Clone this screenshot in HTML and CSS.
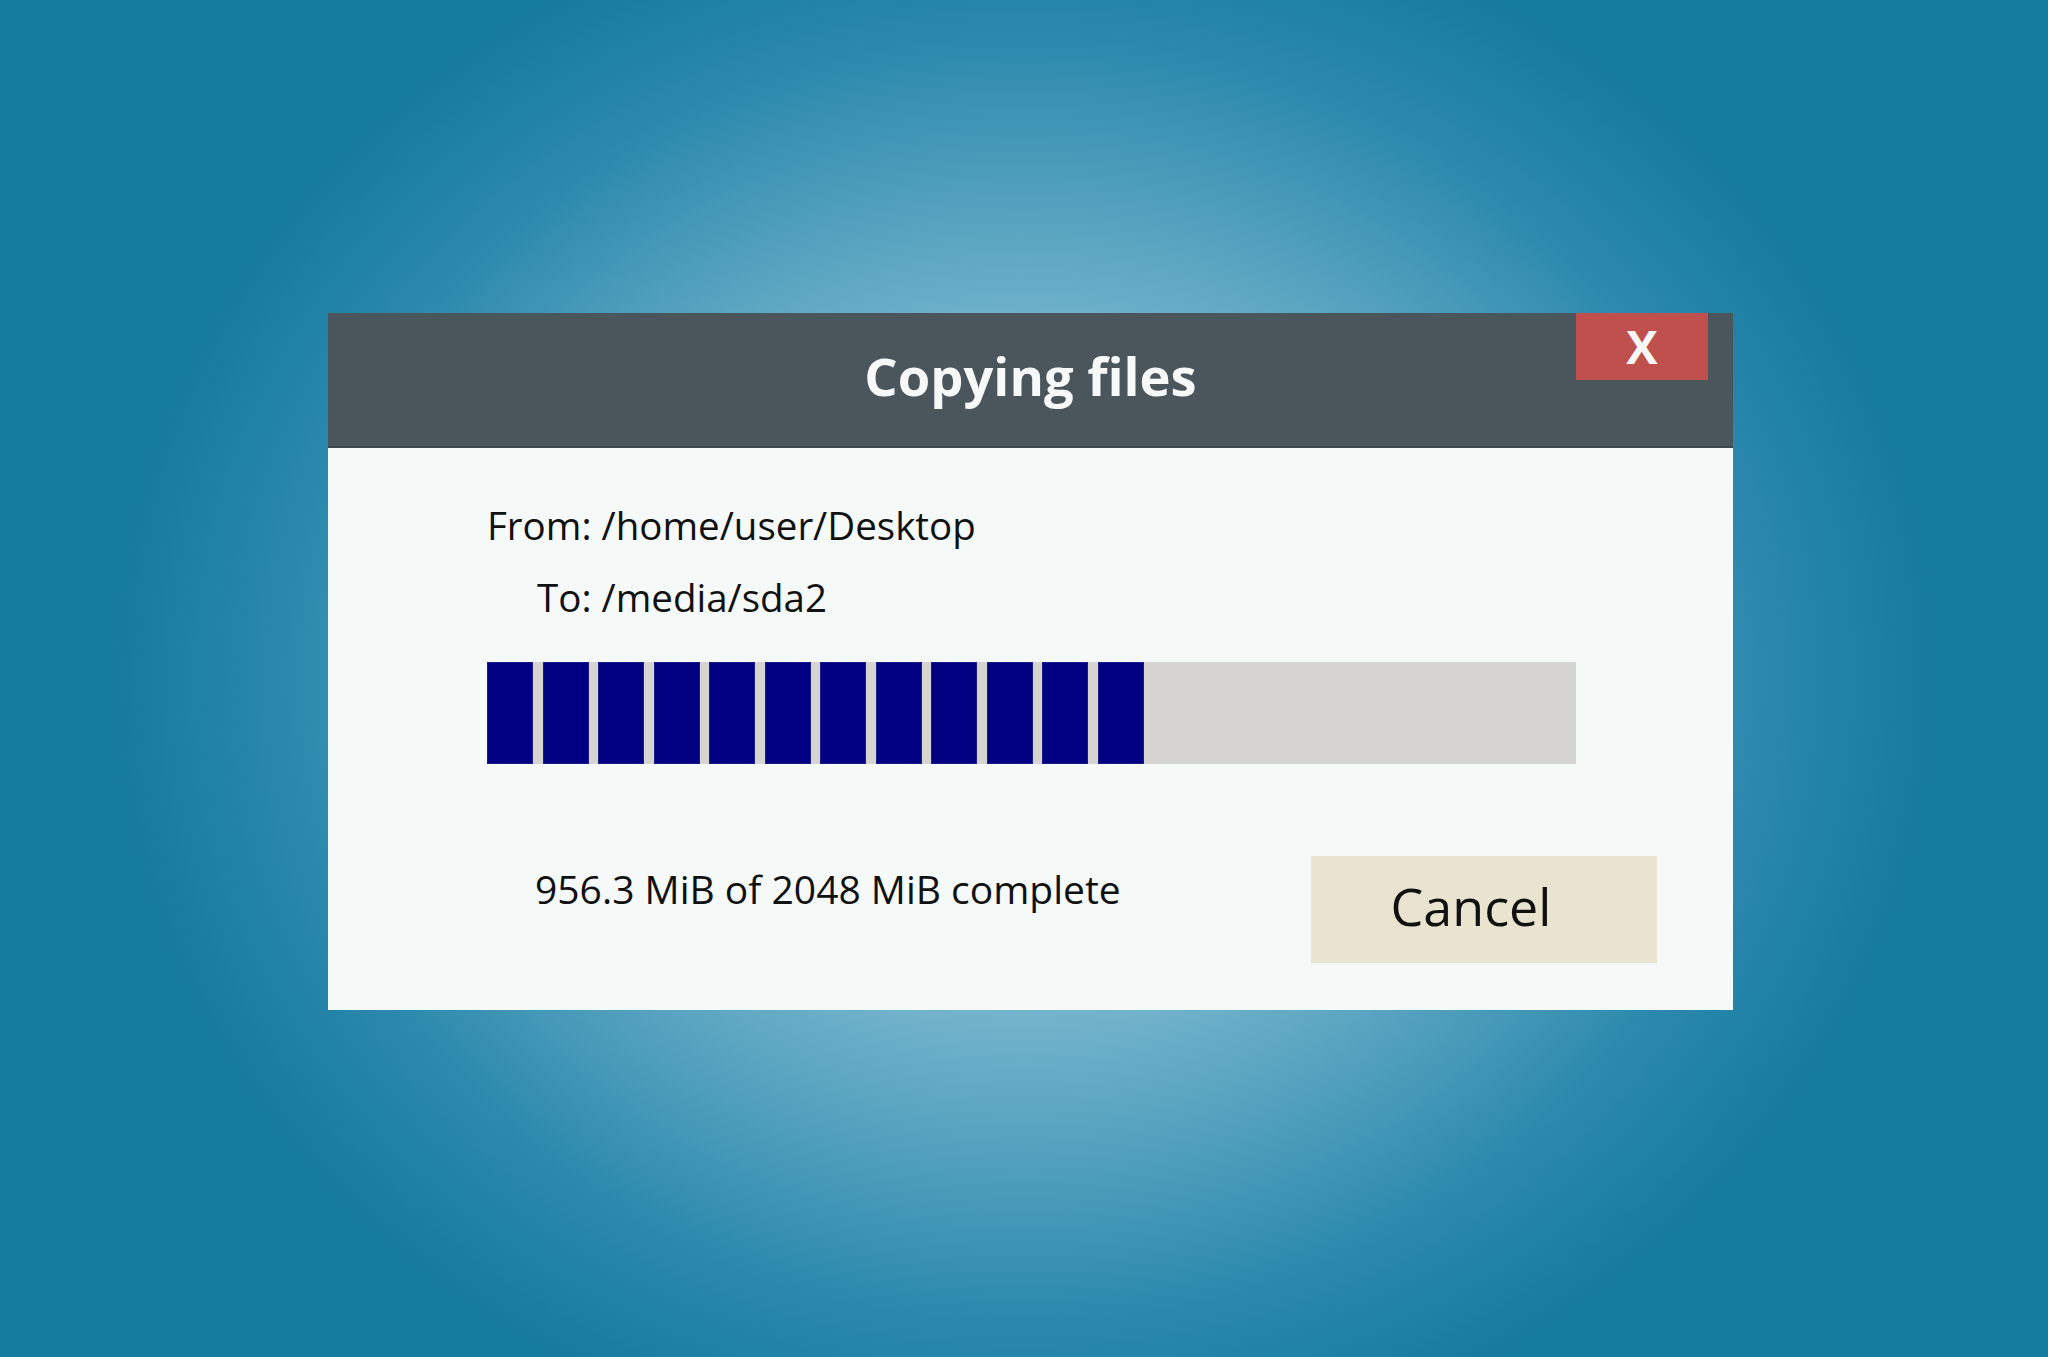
FILE: index.html
```html
<!DOCTYPE html>
<html lang="en">
<head>
  <meta charset="UTF-8" />
  <meta name="viewport" content="width=device-width, initial-scale=1.0" />
  <title>Copying files</title>
  <link rel="stylesheet" href="styles.css">
</head>
<body>

  <div class="desktop">
    <div class="dialog">

      <div class="titlebar">
        <h1>Copying files</h1>
        <button class="close">X</button>
      </div>

      <div class="dialog-body">
        <div class="paths">
          <span class="label">From:</span>
          <span class="path">/home/user/Desktop</span>
          <span class="label">To:</span>
          <span class="path">/media/sda2</span>
        </div>

        <div class="progress">
          <div class="chunk"></div>
          <div class="chunk"></div>
          <div class="chunk"></div>
          <div class="chunk"></div>
          <div class="chunk"></div>
          <div class="chunk"></div>
          <div class="chunk"></div>
          <div class="chunk"></div>
          <div class="chunk"></div>
          <div class="chunk"></div>
          <div class="chunk"></div>
          <div class="chunk"></div>
        </div>

        <div class="footer">
          <div class="status">956.3 MiB of 2048 MiB complete</div>
          <button class="cancel">Cancel</button>
        </div>
      </div>

    </div>
  </div>

</body>
</html>
```

FILE: styles.css
```css
:root {
  --fundo-borda: #147a9e;
  --titulo: #4a555c;
  --fechar: #c0504d;
  --janela: #f5faf8;
  --botao: #e8e4cf;
  --bloco: #000080;
  --trilha: #d5d4d1;
}

* {
  box-sizing: border-box;
}

body {
  margin: 0;
  padding: 0;
  font-family: 'Open Sans', 'Noto Sans', sans-serif;
  color: #111;
  background-color: var(--fundo-borda);
  background-image: radial-gradient(ellipse 920px 800px at 1024px 678px,
    #c4e1eb 0%, #8dc3d6 28%, #5ca6c2 55%, #2b89ad 80%, var(--fundo-borda) 100%);
  min-height: 100vh;
}

.desktop {
  padding: 313px 0 0 328px;
}

.dialog {
  width: 1405px;
  background-color: var(--janela);
}

.titlebar {
  position: relative;
  height: 135px;
  padding-top: 27px;
  background-color: var(--titulo);
  border-bottom: 2px solid #3f484e;
  text-align: center;
}

.titlebar h1 {
  margin: 0;
  font-size: 52.5px;
  font-weight: 700;
  color: #f7f8f8;
  line-height: normal;
}

.close {
  position: absolute;
  top: 0;
  right: 25px;
  width: 132px;
  height: 67px;
  padding: 0;
  border: none;
  background-color: var(--fechar);
  color: #f7f7f7;
  font-family: 'Open Sans', sans-serif;
  font-size: 47px;
  font-weight: 700;
  line-height: 67px;
}

.dialog-body {
  padding: 41px 76px 47px 159px;
}

.paths {
  display: grid;
  grid-template-columns: auto 1fr;
  column-gap: 10px;
  font-size: 38.5px;
  line-height: 72px;
}

.label {
  text-align: right;
}

.progress {
  display: flex;
  gap: 9.5px;
  height: 102px;
  margin: 29px 81px 0 0;
  background-color: var(--trilha);
}

.chunk {
  width: 46px;
  background-color: var(--bloco);
  box-shadow: inset 0 0 0 1px #1a1a8a;
}

.footer {
  display: flex;
  align-items: flex-start;
  margin-top: 92px;
}

.status {
  margin: 6px 0 0 48px;
  font-size: 39px;
  line-height: normal;
}

.cancel {
  margin-left: auto;
  width: 346px;
  height: 107px;
  padding: 0 26px 8px 0;
  border: none;
  background-color: var(--botao);
  font-family: 'Open Sans', sans-serif;
  font-size: 52px;
  color: #111;
}
```
